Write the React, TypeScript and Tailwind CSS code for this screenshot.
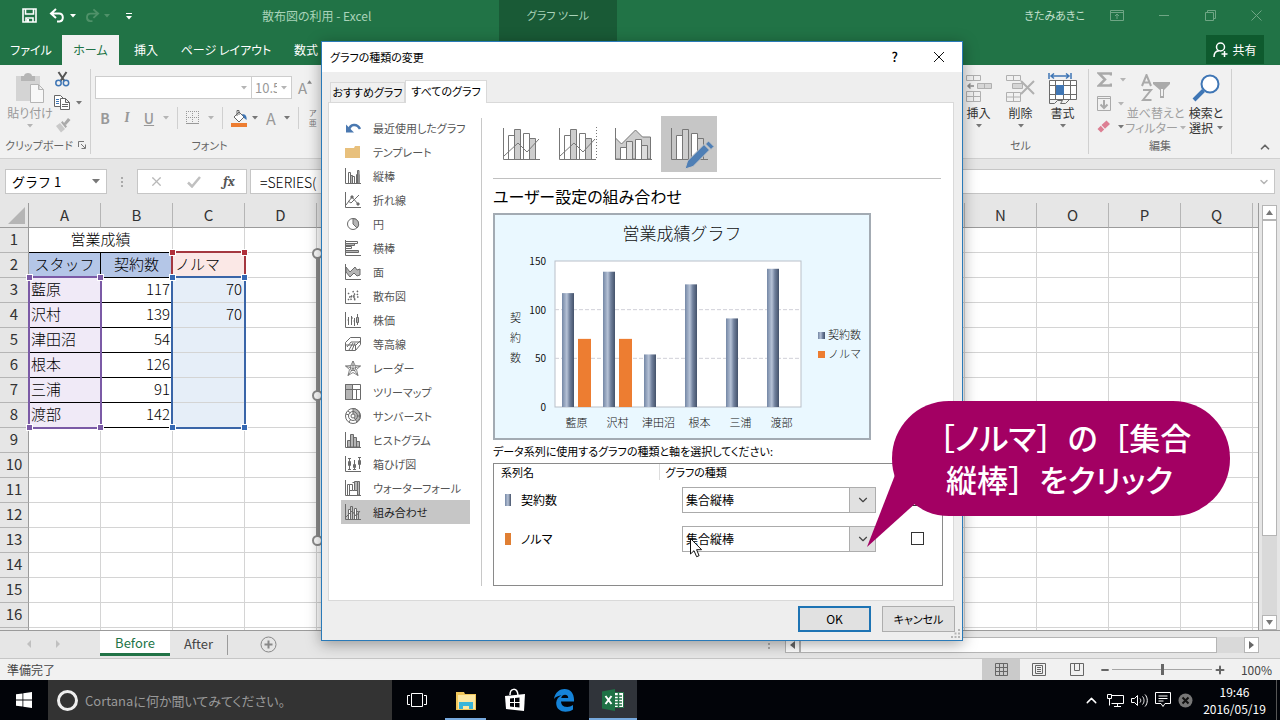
import type { ReactNode } from 'react'
import { ChevronDown, ChevronUp, Minus, Plus, X } from 'lucide-react'

type IconProps = { className?: string }

const COLUMNS = 'ABCDEFGHIJKLMNOPQR'.split('')
const EMPTY_ROWS = [9, 10, 11, 12, 13, 14, 15, 16, 17]

const STAFF = [
  { row: 3, name: '藍原', contracts: 117, norm: 70 },
  { row: 4, name: '沢村', contracts: 139, norm: 70 },
  { row: 5, name: '津田沼', contracts: 54, norm: null },
  { row: 6, name: '根本', contracts: 126, norm: null },
  { row: 7, name: '三浦', contracts: 91, norm: null },
  { row: 8, name: '渡部', contracts: 142, norm: null },
]

/* ---------- small shared pieces ---------- */

function Caret({ className = 'fill-[#777]' }: IconProps) {
  return (
    <svg width="6" height="4" viewBox="0 0 6 4" className={`shrink-0 ${className}`}>
      <path d="M0 0h6L3 3.5z" />
    </svg>
  )
}

function Svg({ size = 16, children }: { size?: number; children: ReactNode }) {
  return (
    <svg width={size} height={size} viewBox="0 0 16 16" fill="none" stroke="#6a6a6a" className="shrink-0">
      {children}
    </svg>
  )
}

/* ---------- title bar + tabs ---------- */

function TitleBar() {
  return (
    <div className="flex h-[35px] items-center">
      <div className="flex w-[262px] items-center pl-[22px] pb-1">
        <button aria-label="上書き保存" className="mr-3">
          <svg width="15" height="15" viewBox="0 0 15 15" fill="none" stroke="#fff" strokeWidth="1.6">
            <path d="M1 1h13v13H1zM3.5 1v5h8V1M4 14v-4h7v4" />
            <path d="M6 11v3" strokeWidth="2" />
          </svg>
        </button>
        <button aria-label="元に戻す" className="flex items-center gap-1">
          <svg width="17" height="15" viewBox="0 0 17 15" fill="none" stroke="#fff" strokeWidth="2">
            <path d="M7 1L2 5.5 7 10M2 5.5h8c5 0 5 7.5 .5 8H8" />
          </svg>
          <Caret className="fill-white" />
        </button>
        <button aria-label="やり直し" className="ml-2 flex items-center gap-1">
          <svg width="16" height="15" viewBox="0 0 17 15" fill="none" stroke="#4f9169" strokeWidth="2">
            <path d="M10 1l5 4.5L10 10M15 5.5H7c-5 0-5 7.5-.5 8H9" />
          </svg>
          <Caret className="fill-[#4f9169]" />
        </button>
        <button aria-label="クイック アクセスのカスタマイズ" className="ml-4">
          <svg width="6" height="8" viewBox="0 0 6 8" fill="#fff">
            <path d="M0 1h6v1H0zM0 4h6L3 7.5z" />
          </svg>
        </button>
      </div>
      <div className="w-[237px] pb-1 text-xs text-[#a9d3b9]">散布図の利用 - Excel</div>
      <div className="flex h-full w-[118px] items-center justify-center bg-[#195a36] pb-1 text-[11px] text-[#a9d3b9]">
        グラフ ツール
      </div>
      <div className="ml-auto flex items-center pr-[18px] pb-1">
        <span className="mr-[25px] text-[11px] text-[#c4e0ce]">きたみあきこ</span>
        <div className="flex items-center gap-[35px] text-[#6fa685]">
          <button aria-label="リボンの表示オプション">
            <svg width="14" height="11" viewBox="0 0 14 11" fill="none" stroke="currentColor">
              <path d="M.5 .5h13v10H.5zM.5 2.5h13M7 9V4M5 6l2-2 2 2" />
            </svg>
          </button>
          <button aria-label="最小化">
            <svg width="11" height="11" viewBox="0 0 11 11" stroke="currentColor">
              <path d="M0 5.5h10" />
            </svg>
          </button>
          <button aria-label="元に戻す (縮小)">
            <svg width="11" height="11" viewBox="0 0 11 11" fill="none" stroke="currentColor">
              <path d="M.5 2.5h8v8h-8zM2.5 2.5v-2h8v8h-2" />
            </svg>
          </button>
          <button aria-label="閉じる">
            <svg width="11" height="11" viewBox="0 0 11 11" stroke="currentColor">
              <path d="M.5 .5l10 10M10.5 .5l-10 10" />
            </svg>
          </button>
        </div>
      </div>
    </div>
  )
}

function RibbonTabs() {
  return (
    <div className="flex h-[30px] items-stretch text-xs text-white">
      <button className="w-[62px]">ファイル</button>
      <button className="w-[57px] bg-[#f1f1f1] text-[#217346]">ホーム</button>
      <button className="w-[54px]">挿入</button>
      <button className="w-[106px]">ページ レイアウト</button>
      <button className="w-[54px]">数式</button>
      <div className="ml-[166px] w-[118px] bg-[#195a36]" />
      <button className="mr-4 mb-px ml-auto flex w-[58px] items-center justify-center gap-1 bg-[#0e5a2e]">
        <svg width="15" height="16" viewBox="0 0 15 16" fill="none" stroke="#fff" strokeWidth="1.5">
          <circle cx="7.5" cy="5" r="4" />
          <path d="M1 15c0-4 2-6 5-6.2M11.5 9v6M8.5 12h6" />
        </svg>
        共有
      </button>
    </div>
  )
}

/* ---------- ribbon ---------- */

function RibbonGroup({ label, className, children, launcher }: {
  label: string
  className: string
  children: ReactNode
  launcher?: boolean
}) {
  return (
    <div className={`flex shrink-0 flex-col ${className}`}>
      <div className="flex-1">{children}</div>
      <div className="flex h-[18px] items-center text-[11px] text-[#666]">
        <span className="flex-1 text-center">{label}</span>
        {launcher && (
          <button aria-label={`${label}の設定`} className="mr-1">
            <svg width="8" height="8" viewBox="0 0 8 8" fill="none" stroke="#777">
              <path d="M.5 6V.5H6M3 3l4 4M7.5 3.5v4h-4" />
            </svg>
          </button>
        )}
      </div>
    </div>
  )
}

function BigButton({ className, icon, children }: { className: string; icon: ReactNode; children: ReactNode }) {
  return (
    <button className={`flex flex-col items-center text-xs leading-[15px] ${className}`}>
      <span className="mb-[2px] flex h-[30px] items-center">{icon}</span>
      {children}
    </button>
  )
}

function PasteIcon() {
  return (
    <svg width="28" height="30" viewBox="0 0 28 30">
      <path fill="#d4d4d4" d="M0 3h24v25H0z" />
      <path fill="#b5b5b5" d="M5 3h3c0-4 8-4 8 0h3v5H5z" />
      <path fill="#f8f8f8" stroke="#b5b5b5" d="M14.5 11.5h8l5 5v13h-13zM22.5 11.5v5h5" />
    </svg>
  )
}

function InsertIcon() {
  return (
    <svg width="26" height="27" viewBox="0 0 26 27" fill="none" stroke="#b0b0b0">
      <path d="M.5 .5h14v5H.5zM7.5 .5v5M.5 16.5h14v10H.5zM.5 21.5h14M7.5 16.5v10" />
      <path fill="#d6d6d6" d="M11.5 8.5h14v5h-14zM18.5 8.5v5" />
      <path stroke="#8b8b8b" strokeWidth="1.5" d="M8 11H2M4.5 8.5L2 11l2.5 2.5" />
    </svg>
  )
}

function DeleteIcon() {
  return (
    <svg width="29" height="27" viewBox="0 0 29 27" fill="none" stroke="#b0b0b0">
      <path d="M.5 .5h14v5H.5zM7.5 .5v5M.5 17.5h14v9H.5zM.5 22h14M7.5 17.5v9" />
      <path fill="#d6d6d6" d="M6.5 8.5h10v5h-10z" />
      <path strokeWidth="2" d="M15 6l13 13M28 6L15 19" />
    </svg>
  )
}

function FormatIcon() {
  return (
    <svg width="29" height="31" viewBox="0 0 29 31" fill="none" stroke="#6b6b6b">
      <path fill="#fff" d="M1.5 7.5h27v19h-27z" />
      <path d="M1.5 12.5h27M1.5 21.5h27M7.5 7.5v19M15.5 7.5v19M22.5 7.5v19M1.5 26v4.5h5l3-3h5l-2 3h5l4-4" />
      <path fill="#3f76b5" stroke="none" d="M8 12h8v10H8z" />
      <path stroke="#3f76b5" strokeWidth="1.5" d="M1 0v6M23 0v6M3 3h18M6 .5L3 3l3 2.5M18 .5L21 3l-3 2.5" />
    </svg>
  )
}

function Ribbon() {
  return (
    <div className="flex h-[94px] border-b border-[#d0d0d0] bg-[#f1f1f1] py-1">
      <RibbonGroup label="クリップボード" launcher className="w-[91px] border-r border-[#d0d0d0]">
        <div className="flex pl-1">
          <BigButton className="w-[48px] pt-1 pl-1 text-[#999]" icon={<PasteIcon />}>
            <span className="whitespace-nowrap">貼り付け</span>
            <span className="mt-1"><Caret className="fill-[#b5b5b5]" /></span>
          </BigButton>
          <div className="flex flex-col gap-2 pt-[2px] pl-[2px]">
            <button aria-label="切り取り" className="pl-px">
              <svg width="15" height="16" viewBox="0 0 15 16" fill="none" strokeWidth="1.5">
                <path stroke="#555" strokeWidth="2" d="M3.5 1l6 9M11.5 1l-6 9" />
                <circle cx="3.5" cy="12" r="2.7" stroke="#3f76b5" />
                <circle cx="11" cy="12" r="2.7" stroke="#3f76b5" />
              </svg>
            </button>
            <button aria-label="コピー" className="flex items-center gap-[6px]">
              <svg width="16" height="15" viewBox="0 0 16 15" fill="#fff" stroke="#666">
                <path d="M.5 .5h6l3 3v8h-9z" />
                <path d="M6.5 3.5h5l4 4v7h-9zM11.5 3.5v4h4M8 9.5h6M8 11.5h6" />
                <path stroke="#3f76b5" d="M2 4.5h3M2 6.5h3M2 8.5h3" />
              </svg>
              <Caret />
            </button>
            <button aria-label="書式のコピー/貼り付け" className="pl-px">
              <svg width="16" height="15" viewBox="0 0 16 15">
                <path fill="#c9c9c9" d="M1 8l4-3 5 6-4 3.5z" />
                <path fill="#aaa" d="M6 4.5l1.5-1.5L12 8.5 10.5 10zM9 5l4-5 2.5 2-4.5 5z" />
              </svg>
            </button>
          </div>
        </div>
      </RibbonGroup>

      <RibbonGroup label="フォント" className="w-[233px] pl-1">
        <div className="flex items-center pt-[7px]">
          <div className="flex h-[23px] w-[157px] items-center border border-[#cdcdcd] bg-white pr-1">
            <input aria-label="フォント名" className="h-full min-w-0 flex-1 bg-transparent" />
            <Caret className="fill-[#b5b5b5]" />
          </div>
          <div className="flex h-[23px] w-10 items-center border border-l-0 border-[#cdcdcd] bg-white pr-1 text-[13px] text-[#999]">
            <input aria-label="フォント サイズ" defaultValue="10.5" className="h-full w-[25px] min-w-0 bg-transparent pl-[3px]" />
            <Caret className="ml-1 fill-[#b5b5b5]" />
          </div>
          <button aria-label="フォント サイズの拡大" className="ml-[6px] flex text-[15px] leading-4 text-[#999]">
            A
            <svg width="5" height="4" viewBox="0 0 6 4" fill="#888"><path d="M0 4h6L3 0z" /></svg>
          </button>
        </div>
        <div className="mt-2 flex h-[22px] items-center text-sm text-[#999]">
          <button className="w-[20px] font-bold">B</button>
          <button className="w-[24px] font-serif font-bold italic">I</button>
          <button className="w-[20px] font-medium underline">U</button>
          <Caret className="ml-1 fill-[#b5b5b5]" />
          <span className="ml-2 h-[22px] w-px bg-[#d0d0d0]" />
          <button aria-label="罫線" className="ml-2 flex items-center gap-2">
            <svg width="14" height="14" viewBox="0 0 14 14" fill="none" stroke="#999" strokeDasharray="1 1">
              <path d="M.5 0v13M6.5 0v13M12.5 0v13M0 .5h13M0 6.5h13" />
              <path strokeDasharray="none" d="M0 12.5h13" />
            </svg>
            <Caret className="fill-[#b5b5b5]" />
          </button>
          <span className="ml-2 h-[22px] w-px bg-[#d0d0d0]" />
          <button aria-label="塗りつぶしの色" className="ml-2 flex items-center gap-1">
            <svg width="17" height="17" viewBox="0 0 17 17">
              <path fill="#ed7d31" d="M0 13h16v4H0z" />
              <path fill="#fff" stroke="#666" d="M3 7l5-5 5 5-5 5zM6 6V.5h2V5" />
              <path fill="#3f76b5" d="M11 4c4 0 5 3 4.5 6L13 8z" />
            </svg>
            <Caret />
          </button>
          <button aria-label="フォントの色" className="ml-2 flex items-center gap-2 text-base">
            A
            <Caret />
          </button>
          <span className="ml-2 h-[22px] w-px bg-[#d0d0d0]" />
          <button className="ml-[10px] flex flex-col text-[8px] leading-[10px] text-[#777]">
            <span>ア</span>
            <span>亜</span>
          </button>
        </div>
      </RibbonGroup>

      <RibbonGroup label="セル" className="ml-auto w-[136px] border-r border-[#d0d0d0] text-[#333]">
        <div className="flex justify-center pt-1">
          <BigButton className="w-[42px]" icon={<InsertIcon />}>
            挿入
            <span className="mt-1"><Caret /></span>
          </BigButton>
          <BigButton className="w-[42px]" icon={<DeleteIcon />}>
            削除
            <span className="mt-1"><Caret /></span>
          </BigButton>
          <BigButton className="w-[42px]" icon={<FormatIcon />}>
            書式
            <span className="mt-1"><Caret /></span>
          </BigButton>
        </div>
      </RibbonGroup>

      <RibbonGroup label="編集" className="w-[143px] border-r border-[#d0d0d0] text-[#333]">
        <div className="flex pl-2">
          <div className="flex w-[30px] shrink-0 flex-col gap-[9px] pt-[3px]">
            <button aria-label="合計" className="flex items-center gap-2">
              <svg width="15" height="15" viewBox="0 0 15 15" fill="none" stroke="#aaa" strokeWidth="2.5">
                <path d="M14 3.5V1.5H2L8 7.5 2 13.5h12v-2" />
              </svg>
              <Caret className="fill-[#b5b5b5]" />
            </button>
            <button aria-label="フィル" className="flex items-center gap-[7px]">
              <svg width="14" height="15" viewBox="0 0 14 15" fill="none" stroke="#aaa">
                <path d="M.5 .5h13v14H.5zM.5 2.5h13" />
                <path strokeWidth="2" d="M7 4v8M3.5 8.5L7 12l3.500-3.500" />
              </svg>
              <Caret className="fill-[#b5b5b5]" />
            </button>
            <button aria-label="クリア" className="flex items-center gap-[7px]">
              <svg width="14" height="13" viewBox="0 0 14 13" fill="#dd7f93">
                <path d="M4.500 5L9.500 .5 13 4 8 8.700zM3.800 5.800l3.400 3.600L4 12.500.5 9z" />
              </svg>
              <Caret />
            </button>
          </div>
          <BigButton className="w-[57px] pt-1 text-[#a0a0a0]" icon={
            <svg width="30" height="28" viewBox="0 0 30 28" fill="none" stroke="#aaa" strokeWidth="2">
              <path d="M1 12L5.500 1 10 12M2.500 8.500h6M2 16h8L2 26h8.500" />
              <path fill="#aaa" stroke="none" d="M12 8h17v2l-6 6v8h-4v-8l-7-6z" />
              <path fill="#f1f1f1" stroke="none" d="M20 15h2v7h-2z" />
            </svg>
          }>
            <span className="whitespace-nowrap">並べ替えと</span>
            <span className="flex items-center gap-[2px] whitespace-nowrap">フィルター<Caret className="fill-[#b5b5b5]" /></span>
          </BigButton>
          <BigButton className="w-[44px] pt-1" icon={
            <svg width="28" height="28" viewBox="0 0 28 28" fill="#fff" stroke="#3f76b5">
              <circle cx="18" cy="10" r="8.500" strokeWidth="2" />
              <path strokeWidth="4" d="M11.500 16.500L2 26" />
            </svg>
          }>
            <span className="whitespace-nowrap">検索と</span>
            <span className="flex items-center gap-1 whitespace-nowrap">選択<Caret /></span>
          </BigButton>
        </div>
      </RibbonGroup>
      <div className="flex w-[48px] items-end justify-end pr-2">
        <button aria-label="リボンを折りたたむ">
          <ChevronUp size={14} strokeWidth={3} color="#666" />
        </button>
      </div>
    </div>
  )
}

function FormulaBar() {
  return (
    <div className="flex h-[44px] bg-[#e6e6e6] px-[5px] pt-[10px] pb-[9px]">
      <div className="flex w-[102px] items-center border border-[#c6c6c6] bg-white pr-[6px] text-[13px] [font-feature-settings:normal]">
        <input aria-label="名前ボックス" defaultValue="グラフ 1" className="h-full min-w-0 flex-1 pl-[6px]" />
        <svg width="8" height="5" viewBox="0 0 8 5" fill="#777"><path d="M0 0h8L4 4.500z" /></svg>
      </div>
      <svg width="30" height="25" viewBox="0 0 30 25" fill="#aaa" className="shrink-0">
        <path d="M14 8h2v2h-2zM14 12h2v2h-2zM14 16h2v2h-2z" />
      </svg>
      <div className="flex w-[110px] shrink-0 items-center justify-around border border-[#c6c6c6] bg-white">
        <button aria-label="キャンセル"><X size={15} color="#b8b8b8" /></button>
        <button aria-label="入力">
          <svg width="14" height="12" viewBox="0 0 14 12" fill="none" stroke="#c0c0c0" strokeWidth="2.500"><path d="M1 6.500l4 4L13 1" /></svg>
        </button>
        <button className="font-serif text-sm font-bold text-[#555] italic">fx</button>
      </div>
      <div className="ml-[3px] flex flex-1 items-center border border-[#c6c6c6] bg-white pr-1">
        <input aria-label="数式バー" defaultValue="=SERIES(" className="h-full min-w-0 flex-1 pl-[9px] text-sm font-light" />
        <ChevronDown size={12} strokeWidth={3} color="#b5b5b5" />
      </div>
    </div>
  )
}

/* ---------- worksheet ---------- */

function RangeFrame({ className, handle, corners }: { className: string; handle: string; corners: string[] }) {
  return (
    <div className={`pointer-events-none absolute border-2 ${className}`}>
      {corners.map((corner) => (
        <span key={corner} className={`absolute size-[7px] border border-white ${handle} ${corner}`} />
      ))}
    </div>
  )
}

const TL = '-top-1 -left-1'
const TR = '-top-1 -right-1'
const BL = '-bottom-1 -left-1'
const BR = '-right-1 -bottom-1'

const ROW_HEAD = 'border-r border-b border-r-[#9b9b9b] border-b-[#b5b5b5] bg-[#e6e6e6] text-center font-normal text-[#333]'
const CELL = 'border-r border-b border-[#d4d4d4]'
const LINED = 'border-r border-b border-black'

function Blanks({ from }: { from: number }) {
  return (
    <>
      {COLUMNS.slice(from).map((c) => (
        <td key={c} className={CELL} />
      ))}
    </>
  )
}

function Sheet() {
  return (
    <div className="flex min-h-0 flex-1 bg-[#e6e6e6]">
      <div className="relative min-w-0 flex-1 overflow-hidden border-r border-[#9b9b9b] bg-white font-light [font-feature-settings:normal]">
        <table className="w-[1325px] table-fixed border-separate border-spacing-0 text-[15px] leading-[22px]">
          <thead>
            <tr className="h-[25px] bg-[#e6e6e6] text-[#333]">
              <th className="w-[29px] border-r border-b border-[#9b9b9b] p-0">
                <svg width="17" height="17" viewBox="0 0 17 17" fill="#b5b5b5" className="ml-2"><path d="M17 0v17H0z" /></svg>
              </th>
              {COLUMNS.map((c) => (
                <th key={c} className="w-[72px] border-r border-b border-r-[#b5b5b5] border-b-[#9b9b9b] p-0 font-normal">
                  {c === 'R' ? '' : c}
                </th>
              ))}
            </tr>
          </thead>
          <tbody className="[&_td]:p-0 [&_td]:pb-[2px] [&_th]:p-0 [&_th]:pb-[2px] [&_tr]:h-[25px]">
            <tr>
              <th className={ROW_HEAD}>1</th>
              <td colSpan={2} className="border-r border-b border-r-[#d4d4d4] border-b-black text-center">営業成績</td>
              <Blanks from={2} />
            </tr>
            <tr>
              <th className={ROW_HEAD}>2</th>
              <td className={`${LINED} bg-[#b4c6e7] text-center`}>スタッフ</td>
              <td className={`${LINED} bg-[#b4c6e7] text-center`}>契約数</td>
              <td className={`${CELL} bg-[#fbe8e6]`}><span className="pl-[2px]">ノルマ</span></td>
              <Blanks from={3} />
            </tr>
            {STAFF.map((s) => (
              <tr key={s.row}>
                <th className={ROW_HEAD}>{s.row}</th>
                <td className={`${LINED} bg-[#f0eaf7]`}><span className="pl-[2px]">{s.name}</span></td>
                <td className={`${LINED} text-right`}><span className="pr-[2px]">{s.contracts}</span></td>
                <td className={`${CELL} bg-[#e6eef8] text-right`}><span className="pr-[2px]">{s.norm}</span></td>
                <Blanks from={3} />
              </tr>
            ))}
            {EMPTY_ROWS.map((n) => (
              <tr key={n}>
                <th className={ROW_HEAD}>{n < 17 ? n : ''}</th>
                <Blanks from={0} />
              </tr>
            ))}
          </tbody>
        </table>

        {/* source ranges of the selected chart */}
        <RangeFrame className="top-[48px] left-[171px] h-[27px] w-[75px] border-[#a4373f]" handle="bg-[#b0303a]" corners={[TL, TR]} />
        <RangeFrame className="top-[73px] left-[28px] h-[153px] w-[74px] border-[#7b5aa6]" handle="bg-[#7b5aa6]" corners={[TL, TR, BL, BR]} />
        <RangeFrame className="top-[73px] left-[171px] h-[153px] w-[75px] border-[#3a65a8]" handle="bg-[#3568b3]" corners={[TL, TR, BL, BR]} />

        {/* chart object, mostly behind the dialog */}
        <div className="absolute top-[49px] left-[316px] h-[290px] w-[600px] border-4 border-[#8c8c8c] bg-[#eaf8ff]">
          <span className="absolute -top-2 -left-2 size-[11px] rounded-full border-2 border-[#8c8c8c] bg-white" />
          <span className="absolute top-[134px] -left-2 size-[11px] rounded-full border-2 border-[#8c8c8c] bg-white" />
          <span className="absolute -bottom-2 -left-2 size-[11px] rounded-full border-2 border-[#8c8c8c] bg-white" />
        </div>
      </div>

      <div className="flex w-[21px] flex-col items-center pt-[2px] pr-px">
        <button aria-label="上へ" className="flex size-[15px] items-center justify-center border border-[#b5b5b5] bg-white">
          <svg width="7" height="5" viewBox="0 0 7 5" fill="#777"><path d="M0 5h7L3.500 0z" /></svg>
        </button>
        <div className="flex w-[15px] flex-1 flex-col bg-[#d9d9d9]">
          <div className="h-4/5 border border-[#b5b5b5] bg-white" />
        </div>
        <button aria-label="下へ" className="flex size-[15px] items-center justify-center border border-[#b5b5b5] bg-white">
          <svg width="7" height="5" viewBox="0 0 7 5" fill="#777"><path d="M0 0h7L3.500 5z" /></svg>
        </button>
      </div>
    </div>
  )
}

function SheetTabs() {
  return (
    <div className="flex h-[28px] items-start border-t border-[#9b9b9b] bg-[#e6e6e6]">
      <div className="flex h-[25px] w-[100px] items-center pl-[26px]">
        <svg width="36" height="8" viewBox="0 0 36 8" fill="#c0c0c0">
          <path d="M5 0v8L1 4zM30 0v8l4-4z" />
        </svg>
      </div>
      <button className="h-[25px] w-[70px] border-b-[3px] border-[#217346] bg-white pt-px text-[13px] text-[#217346]">Before</button>
      <button className="h-[25px] w-[57px] text-[13px] text-[#444]">After</button>
      <span className="mt-1 h-5 w-px bg-[#9b9b9b]" />
      <button aria-label="新しいシート" className="ml-8 pt-[5px]">
        <svg width="17" height="17" viewBox="0 0 17 17" fill="none" stroke="#888">
          <circle cx="8.500" cy="8.500" r="7.500" />
          <path strokeWidth="2" d="M8.500 4.500v8M4.500 8.500h8" />
        </svg>
      </button>
      <svg width="3" height="12" viewBox="0 0 3 12" fill="#aaa" className="mt-2 mr-[14px] ml-auto">
        <path d="M0 0h2v2H0zM0 4h2v2H0zM0 8h2v2H0z" />
      </svg>
      <div className="mt-[6px] flex h-4 w-[478px] pr-1">
        <button aria-label="左へ" className="flex w-[15px] items-center justify-center border border-[#b5b5b5] bg-white">
          <svg width="5" height="8" viewBox="0 0 5 8" fill="#666"><path d="M5 0v8L0 4z" /></svg>
        </button>
        <div className="flex flex-1 bg-[#d9d9d9]">
          <div className="w-[417px] border border-[#b5b5b5] bg-white" />
        </div>
        <button aria-label="右へ" className="flex w-[15px] items-center justify-center border border-[#b5b5b5] bg-white">
          <svg width="5" height="8" viewBox="0 0 5 8" fill="#666"><path d="M0 0v8l5-4z" /></svg>
        </button>
      </div>
      <span className="w-[17px]" />
    </div>
  )
}

function StatusBar() {
  return (
    <div className="flex h-[22px] items-center border-t border-[#c6c6c6] bg-[#f1f1f1] pl-[7px] text-xs text-[#444]">
      準備完了
      <div className="ml-auto flex h-full items-center">
        <button aria-label="標準" className="flex h-full w-[38px] items-center justify-center bg-[#cacaca]">
          <svg width="13" height="13" viewBox="0 0 13 13" fill="none" stroke="#666"><path d="M.5 .5h12v12H.5zM4.500 0v13M8.500 0v13M0 4.500h13M0 8.500h13" /></svg>
        </button>
        <button aria-label="ページ レイアウト表示" className="flex w-[38px] justify-center">
          <svg width="14" height="13" viewBox="0 0 14 13" fill="none" stroke="#666"><path d="M.5 .5h13v12H.5zM3.500 2.500h7v8h-7zM5 4.500h4M5 6.500h4M5 8.500h4" /></svg>
        </button>
        <button aria-label="改ページ プレビュー" className="flex w-[38px] justify-center">
          <svg width="14" height="13" viewBox="0 0 14 13" fill="none" stroke="#666"><path d="M.5 .5h13v12H.5zM4.500 .5v7M9.500 .5v7M4.500 7.500h5" /></svg>
        </button>
        <button aria-label="縮小" className="ml-1"><Minus size={10} strokeWidth={5} color="#666" /></button>
        <input
          type="range"
          aria-label="ズーム"
          defaultValue={50}
          className="mx-[2px] h-3 w-[100px] appearance-none bg-[linear-gradient(#a5a5a5,#a5a5a5)] bg-[length:100%_1px] bg-center bg-no-repeat [&::-webkit-slider-thumb]:h-[11px] [&::-webkit-slider-thumb]:w-[3px] [&::-webkit-slider-thumb]:appearance-none [&::-webkit-slider-thumb]:bg-[#666]"
        />
        <button aria-label="拡大"><Plus size={12} strokeWidth={4} color="#666" /></button>
        <span className="w-[54px] pr-2 text-right">100%</span>
      </div>
    </div>
  )
}

/* ---------- taskbar ---------- */

function Taskbar() {
  return (
    <div className="flex h-10 items-stretch bg-[#020409]">
      <button aria-label="スタート" className="flex w-12 items-center justify-center">
        <svg width="16" height="16" viewBox="0 0 16 16" fill="#fff">
          <path d="M0 2.300l6.500-.9v6.200H0zM7.300 1.300L16 0v7.600H7.300zM0 8.400h6.500v6.200L0 13.700zM7.300 8.400H16V16l-8.700-1.200z" />
        </svg>
      </button>
      <div className="flex w-[344px] items-center gap-[7px] bg-[#333] pl-[9px]">
        <span className="size-[21px] rounded-full border-[3px] border-[#eee]" />
        <input aria-label="検索" placeholder="Cortanaに何か聞いてみてください。" className="h-full min-w-0 flex-1 bg-transparent text-[13px] placeholder:text-[#999]" />
      </div>
      <button aria-label="タスク ビュー" className="flex w-[49px] items-center justify-center">
        <svg width="20" height="14" viewBox="0 0 20 14" fill="none" stroke="#fff"><path d="M4.500 .5h11v13h-11zM3 2.500H.5v9H3M17 2.500h2.500v9H17" /></svg>
      </button>
      <button aria-label="エクスプローラー" className="mx-1 flex w-[41px] items-center justify-center border-b-2 border-[#76a9dd] pt-[2px]">
        <svg width="22" height="19" viewBox="0 0 22 19">
          <path fill="#f0c65a" d="M1 1h8l1 2h11v16H1z" />
          <path fill="#fbe7a2" d="M3 4h17v14H3z" />
          <path fill="#39b5d9" d="M4 18v-7h14v7h-4v-3H8v3z" />
        </svg>
      </button>
      <button aria-label="ストア" className="flex w-[49px] items-center justify-center">
        <svg width="22" height="24" viewBox="0 0 22 24" fill="#fff">
          <path fill="none" stroke="#fff" strokeWidth="1.500" d="M6 7c0-7 7-8 8 0" />
          <path d="M1 8l20-2-1 17-18-2z" />
          <path fill="#020409" d="M6 10.500l4-.4v4H6zM11 10l4.500-.5v4.600H11zM6 15h4v4l-4-.5zM11 15h4.500v4.600L11 19z" />
        </svg>
      </button>
      <button aria-label="Edge" className="flex w-[50px] items-center justify-center">
        <svg width="22" height="23" viewBox="0 0 22 23" fill="#1583d8">
          <path d="M1 10C2 3 7 0 11.500 0 18 0 21.500 5 21 12.500H8c.3 6.500 8 6.500 12 3.500v4.500C14 24.500 3 23.500 3.200 13.800 3.400 10 6 7.500 8.500 6.300 5.500 6.500 2.500 8 1 10zM8.200 9h7c.2-4.500-6.300-4.500-7 0z" />
        </svg>
      </button>
      <button aria-label="Excel" className="flex w-12 items-center justify-center border-b-2 border-[#76a9dd] bg-[#30343a] pt-[2px]">
        <svg width="22" height="22" viewBox="0 0 22 22">
          <path fill="#fff" stroke="#217346" d="M12 3.500h9.500v15H12z" />
          <path stroke="#217346" strokeWidth="1.500" d="M12 7h8M12 10h8M12 13h8M12 16h8M16.500 4v14" />
          <path fill="#1e7145" d="M0 2.500L13 0v22L0 19.500z" />
          <path stroke="#fff" strokeWidth="2" d="M3.500 7l6 8M9.500 7l-6 8" />
        </svg>
      </button>
      <div className="ml-auto flex items-center gap-[7px] text-white">
        <ChevronUp size={17} />
        <svg width="17" height="15" viewBox="0 0 17 15" fill="none" stroke="#fff"><path d="M4.500 2.500h12v8h-12M10.500 10.500v3M7 13.500h7M.5 1.500h4v4h-4zM2.500 5.500v7" /></svg>
        <svg width="17" height="15" viewBox="0 0 17 15" fill="none" stroke="#fff"><path d="M.5 5.500h3l3-3v10l-3-3h-3zM9 5.500c1 1 1 3 0 4M11.500 3.500c2 2 2 6 0 8M14 1.500c3 3 3 9 0 12" /></svg>
        <svg width="16" height="16" viewBox="0 0 16 16" fill="none" stroke="#fff"><path d="M.5 .5h15v11H10l-2 3-2-3H.5zM3.500 4h9M3.500 6.500h9M3.500 9h5" /></svg>
        <svg width="15" height="15" viewBox="0 0 15 15" fill="#777"><circle cx="7.500" cy="7.500" r="7" /><path stroke="#111" strokeWidth="2" d="M4.500 4.500l6 6M10.500 4.500l-6 6" /></svg>
      </div>
      <div className="flex w-[84px] flex-col items-center justify-center border-r border-[#555] text-xs leading-[17px] text-white">
        <span>19:46</span>
        <span>2016/05/19</span>
      </div>
      <span className="w-[3px]" />
    </div>
  )
}

/* ---------- chart type list ---------- */

const AXES = <path d="M.5 0v15.500H16" />

const CHART_TYPES: { label: string; icon: ReactNode }[] = [
  {
    label: '最近使用したグラフ',
    icon: <Svg><path stroke="#4a78b0" strokeWidth="2.500" d="M4 10c1-6 8-7 11-1" /><path fill="#4a78b0" stroke="none" d="M1 4.500v8h8z" /></Svg>,
  },
  { label: 'テンプレート', icon: <Svg><path fill="#e8c07c" stroke="none" d="M0 4h9l1-2h5v12H0z" /></Svg> },
  { label: '縦棒', icon: <Svg>{AXES}<path fill="#fff" d="M3.500 15V4.500h2V15M7.500 15V8.500h2V15M11.500 15V6.500H14V15" /><path fill="#b5b5b5" d="M5.500 15V7.500h2V15M12.500 15V2.500H14V15" /></Svg> },
  { label: '折れ線', icon: <Svg>{AXES}<path d="M1 13l6-8 6 7M3 9l3 2 8-8" /><path fill="#6a6a6a" d="M6 4h2v2H6zM12 11h2v2h-2z" /></Svg> },
  { label: '円', icon: <Svg><circle cx="8" cy="8" r="5.500" fill="#fff" /><path fill="#b5b5b5" d="M8 8V2.500A5.500 5.500 0 0 1 12 12z" /></Svg> },
  { label: '横棒', icon: <Svg>{AXES}<path fill="#fff" d="M.5 1.500h12v2H.5zM.5 6.500h6v2h-6z" /><path fill="#b5b5b5" d="M.5 3.500h9v2h-9zM.5 10.500h13v2H.5z" /></Svg> },
  { label: '面', icon: <Svg>{AXES}<path fill="#b5b5b5" d="M1 3l4 5 5-5 2 3 3-1v6l-3 1-3-3-4 4-4-5z" /></Svg> },
  { label: '散布図', icon: <Svg>{AXES}<path strokeDasharray="1.500 2.500" strokeWidth="1.500" d="M3 12L14 2M3 5l9 8M4 9h11M8 3l2 10M13 6l-8 6" /></Svg> },
  { label: '株価', icon: <Svg>{AXES}<path d="M3.500 5v8M6.500 4v9M9.500 6v8M12.500 2v11M2.500 8h1M6.500 6H8M8.500 9h1" /><path fill="#b5b5b5" d="M11.500 5.500h2v5h-2z" /></Svg> },
  { label: '等高線', icon: <Svg><path d="M.5 6.500l5-5h10v7l-5 6H.5zM2 11l4-5h9M4 14l4-7M7 14l3-7M1 9h10l4-4M10.500 14V9" /></Svg> },
  { label: 'レーダー', icon: <Svg><path d="M8 1l2.200 4.500 5.300.5-4 3.500 1.500 6-5-3-5 3 1.500-6L.5 6l5.300-.5zM8 1v7.500M8 8.500L15.500 6M8 8.500l5 7M8 8.500l-5 7M8 8.500L.5 6M5 6.500L8 5l3 1.500-1 4H6z" strokeWidth=".8" /></Svg> },
  { label: 'ツリーマップ', icon: <Svg><path fill="#fff" d="M.5 .5h15v15H.5z" /><path fill="#b5b5b5" d="M.5 .5h7v15h-7z" /><path d="M.5 5.500h15M11.500 5.500v10M7.500 5.500v10" /></Svg> },
  { label: 'サンバースト', icon: <Svg><circle cx="8" cy="8" r="7.500" /><path fill="#b5b5b5" d="M8 8V.5A7.500 7.500 0 0 1 12 14z" /><circle cx="8" cy="8" r="4.500" /><circle cx="8" cy="8" r="2" fill="#fff" /><path d="M1 6l3 1M4 14l2-3M12.500 8h3M3 3l2.500 2" /></Svg> },
  { label: 'ヒストグラム', icon: <Svg>{AXES}<path fill="#b5b5b5" d="M2.500 15V8.500h3V15zM5.500 15V2.500h3V15zM8.500 15V5.500h3V15zM11.500 15V9.500h3V15z" /></Svg> },
  { label: '箱ひげ図', icon: <Svg>{AXES}<path fill="#fff" d="M4.500 2v12M9.500 4v10M14.500 1v12M3 2.500h3M3 13.500h3M8 13.500h3M13 1.500h3M3.500 5.500h2v4h-2zM8.500 8.500h2v3h-2zM13.500 4.500h2v4h-2z" /></Svg> },
  { label: 'ウォーターフォール', icon: <Svg>{AXES}<path fill="#fff" d="M2.500 15V4.500h2V15M4.500 4.500h3v6h-3M7.500 2.500h2v8h-2" /><path fill="#b5b5b5" d="M9.500 1.500h3v9h-3zM12.500 1.500h2V15h-2z" /></Svg> },
  { label: '組み合わせ', icon: <Svg>{AXES}<path fill="#fff" d="M3.500 15V5.500h2V15M9.500 15V4.500h2V15" /><path d="M5.500 15V2.500h2V15M11.500 15V7.500h2V15M1 13l6-6 4 5 4-5" /></Svg> },
]

const COMBO_BARS = (
  <>
    <path fill="#fff" d="M6.500 32V8.500h6V32M21.500 32V6.500h6V32" />
    <path fill="#cdcdcd" d="M12.500 32V2.500h6V32M27.500 32V11.500h6V32" />
    <path d="M1.500 1v31.500H38" />
  </>
)

const COMBO_SUBTYPES: { label: string; drawing: ReactNode }[] = [
  { label: '集合縦棒 - 折れ線', drawing: <>{COMBO_BARS}<path d="M2 29l14-13 9 9 12-13" /></> },
  { label: '集合縦棒 - 第 2 軸の折れ線', drawing: <>{COMBO_BARS}<path d="M2 29l14-13 9 9 12-13" /><path strokeDasharray="1 2" d="M38.500 0v32" /></> },
  {
    label: '積み上げ面 - 集合縦棒',
    drawing: (
      <>
        <path fill="#cdcdcd" d="M1.500 32V11l6 6 14-14 7 7h8v22z" />
        <path fill="#fff" d="M6.500 32V20.500h6V32M21.500 32V12.500h6V32" />
        <path fill="#dedede" d="M12.500 32V14.500h6V32M27.500 32V18.500h6V32" />
        <path d="M1.500 1v31.500H38" />
      </>
    ),
  },
  {
    label: 'ユーザー設定の組み合わせ',
    drawing: (
      <>
        {COMBO_BARS}
        <path fill="#4f7fb5" stroke="#c6c6c6" d="M15 42l2.500-8L34 17.500l5.500 5.500L23 39.500zM35.500 17l3-3 5.500 5.500-3 3z" />
      </>
    ),
  },
]

/* ---------- preview chart ---------- */

const PLOT = { left: 62, top: 48, width: 246, height: 146, max: 150 }

function PreviewChart() {
  const slot = PLOT.width / STAFF.length
  const bottom = PLOT.top + PLOT.height
  const toY = (v: number) => bottom - (v / PLOT.max) * PLOT.height

  return (
    <div className="w-[378px] border-2 border-[#a3abb3] bg-[#eaf8ff] [font-feature-settings:normal]">
      <svg viewBox="2 2 374 223" className="block h-[223px] w-full text-[11px]" fill="#111">
        <defs>
          <linearGradient id="steel">
            <stop offset="0" stopColor="#7487a5" />
            <stop offset=".4" stopColor="#b6c2d6" />
            <stop offset=".65" stopColor="#71819d" />
            <stop offset="1" stopColor="#44526a" />
          </linearGradient>
        </defs>
        <text x="189" y="27" textAnchor="middle" className="text-[17px] font-light">営業成績グラフ</text>
        <rect x={PLOT.left} y={PLOT.top} width={PLOT.width} height={PLOT.height} fill="#fff" stroke="#b9c0c9" />
        {[50, 100].map((v) => (
          <line key={v} x1={PLOT.left} x2={PLOT.left + PLOT.width} y1={toY(v)} y2={toY(v)} stroke="#d0d0d8" strokeDasharray="4 2" />
        ))}
        {[0, 50, 100, 150].map((v) => (
          <text key={v} x="53" y={toY(v) + 4} textAnchor="end" className="text-[10px]">{v}</text>
        ))}
        {STAFF.map((s, i) => {
          const x = PLOT.left + i * slot
          return (
            <g key={s.name}>
              <rect x={x + 7} y={toY(s.contracts)} width="12" height={bottom - toY(s.contracts)} fill="url(#steel)" />
              {s.norm && <rect x={x + 23} y={toY(s.norm)} width="13" height={bottom - toY(s.norm)} fill="#ed7d31" />}
              <text x={x + slot / 2 + 1} y="214" textAnchor="middle" className="font-light">{s.name}</text>
            </g>
          )
        })}
        {['契', '約', '数'].map((c, i) => (
          <text key={c} x="17" y={109 + i * 20} className="font-light">{c}</text>
        ))}
        <rect x="325" y="119" width="7" height="7" fill="url(#steel)" />
        <text x="335" y="126" className="font-light">契約数</text>
        <rect x="325" y="138" width="7" height="7" fill="#ed7d31" />
        <text x="335" y="145" className="font-light">ノルマ</text>
      </svg>
    </div>
  )
}

/* ---------- dialog ---------- */

function SeriesRow({ name, swatch }: { name: string; swatch: string }) {
  return (
    <tr className="h-[39px] text-xs">
      <td className="pl-[11px]">
        <span className="flex items-center gap-[10px]">
          <span className={`h-3 w-[6px] ${swatch}`} />
          {name}
        </span>
      </td>
      <td>
        <div className="relative ml-[23px] h-[26px] w-[194px]">
          <select
            aria-label={`${name}のグラフの種類`}
            className="size-full appearance-none border border-[#ababab] bg-white pl-[3px]"
          >
            <option>集合縦棒</option>
          </select>
          <span className="pointer-events-none absolute inset-y-0 right-0 flex w-[27px] items-center justify-center border border-[#adadad] bg-[#e1e1e1]">
            <ChevronDown size={14} strokeWidth={2} color="#444" />
          </span>
        </div>
      </td>
      <td>
        <input type="checkbox" aria-label={`${name}を第 2 軸に表示`} className="ml-[34px] block size-[13px] appearance-none border border-[#333] bg-white" />
      </td>
    </tr>
  )
}

function ChangeChartDialog() {
  return (
    <div
      role="dialog"
      aria-label="グラフの種類の変更"
      className="absolute top-[41px] left-[321px] w-[642px] border border-[#2a7ab8] bg-[#eee] text-[11px] text-black shadow-[0_3px_14px_rgba(0,0,0,0.35)]"
    >
      <div className="flex h-[30px] items-center bg-white pr-[17px] pl-2">
        グラフの種類の変更
        <button className="ml-auto text-[13px] font-medium">?</button>
        <button aria-label="閉じる" className="ml-[35px]">
          <svg width="12" height="12" viewBox="0 0 12 12" stroke="#111"><path d="M1 1l10 10M11 1L1 11" /></svg>
        </button>
      </div>

      <div className="px-[6px] pt-2 pr-2">
        <div role="tablist" className="flex items-end pl-[2px]">
          <button role="tab" className="h-5 w-[75px] border border-b-0 border-[#d9d9d9] bg-[#f0f0f0] px-0 whitespace-nowrap">おすすめグラフ</button>
          <button role="tab" aria-selected className="relative z-10 -mb-px h-[23px] w-[82px] border border-b-0 border-[#d9d9d9] bg-white pb-[2px] whitespace-nowrap">
            すべてのグラフ
          </button>
        </div>

        <div className="flex border border-[#d9d9d9] bg-white pt-[13px] pb-[14px] pl-3">
          <ul className="w-[129px] text-[#555]">
            {CHART_TYPES.map(({ label, icon }) => (
              <li key={label}>
                <button
                  className={`flex h-6 w-full items-center gap-3 pl-1 whitespace-nowrap ${
                    label === '組み合わせ' ? 'bg-[#c6c6c6] text-[#222]' : ''
                  }`}
                >
                  {icon}
                  {label}
                </button>
              </li>
            ))}
          </ul>

          <div className="mt-[2px] ml-[11px] w-px bg-[#c8c8c8]" />

          <div className="ml-[11px] w-[450px]">
            <div className="flex">
              {COMBO_SUBTYPES.map(({ label, drawing }) => (
                <button
                  key={label}
                  aria-label={label}
                  className={`flex size-14 items-center justify-center ${label === 'ユーザー設定の組み合わせ' ? 'bg-[#c6c6c6]' : ''}`}
                >
                  <svg width="42" height="42" viewBox="0 -1 42 42" fill="none" stroke="#777" className="mt-[6px] ml-1 overflow-visible">{drawing}</svg>
                </button>
              ))}
            </div>
            <div className="mt-[6px] mr-[2px] h-px bg-[#c0c0c0]" />
            <h2 className="mt-[5px] mb-[5px] text-base leading-6 font-normal">ユーザー設定の組み合わせ</h2>
            <PreviewChart />
            <p className="h-[23px] leading-[23px]">データ系列に使用するグラフの種類と軸を選択してください:</p>

            <div className="h-[123px] border border-[#8a8a8a]">
              <table className="w-full table-fixed">
                <thead>
                  <tr className="h-[16px] text-left leading-4">
                    <th className="w-[165px] border-r border-[#ddd] pl-[7px] font-normal">系列名</th>
                    <th className="w-[218px] pl-[6px] font-normal">グラフの種類</th>
                    <th />
                  </tr>
                </thead>
                <tbody>
                  <SeriesRow name="契約数" swatch="bg-[linear-gradient(90deg,#7487a5,#b6c2d6,#44526a)]" />
                  <SeriesRow name="ノルマ" swatch="bg-[#e07f33]" />
                </tbody>
              </table>
            </div>
          </div>
        </div>
      </div>

      <div className="flex h-[39px] justify-end gap-[11px] pt-[5px] pr-[7px]">
        <button className="h-[26px] w-[73px] border-2 border-[#1e74b4] bg-[#e1e1e1] text-xs">OK</button>
        <button className="h-[26px] w-[73px] border border-[#adadad] bg-[#e1e1e1]">キャンセル</button>
      </div>
      <svg width="10" height="10" viewBox="0 0 10 10" fill="#b5b5b5" className="absolute right-px bottom-px">
        <path d="M7 0h2v2H7zM7 3.500h2v2H7zM7 7h2v2H7zM3.500 3.500h2v2h-2zM3.500 7h2v2h-2zM0 7h2v2H0z" />
      </svg>
    </div>
  )
}

function Callout() {
  return (
    <div className="absolute top-[401px] left-[866px] h-[147px] w-[365px]">
      <svg viewBox="0 0 365 147" className="absolute inset-0 size-full" fill="#a30063">
        <rect x="26" y="0" width="338" height="115" rx="57" />
        <path d="M29 74L1 146 52 100z" />
      </svg>
      <p className="relative pt-[15px] pl-[58px] text-[31px] leading-[42px] font-medium whitespace-nowrap text-white [font-feature-settings:normal]">
        ［<span className="[font-feature-settings:'palt']">ノルマ</span>］の［集合
        <br />
        <span className="pl-[22px]">縦棒］</span>
        <span className="[font-feature-settings:'palt']">をクリック</span>
      </p>
    </div>
  )
}

export default function App() {
  return (
    <div
      lang="ja"
      className="relative flex h-screen flex-col overflow-hidden [font-family:'Noto_Sans_CJK_JP',sans-serif] [font-feature-settings:'palt']"
    >
      <header className="bg-[#217346]">
        <TitleBar />
        <RibbonTabs />
      </header>
      <Ribbon />
      <FormulaBar />
      <Sheet />
      <SheetTabs />
      <StatusBar />
      <Taskbar />

      <ChangeChartDialog />
      <Callout />
      <svg width="13" height="20" viewBox="0 0 13 20" fill="#fff" stroke="#111" className="absolute top-[538px] left-[690px]">
        <path d="M.5 .5v15.500l3.500-3.300 2.600 6 2.500-1-2.500-6h5z" />
      </svg>
    </div>
  )
}
